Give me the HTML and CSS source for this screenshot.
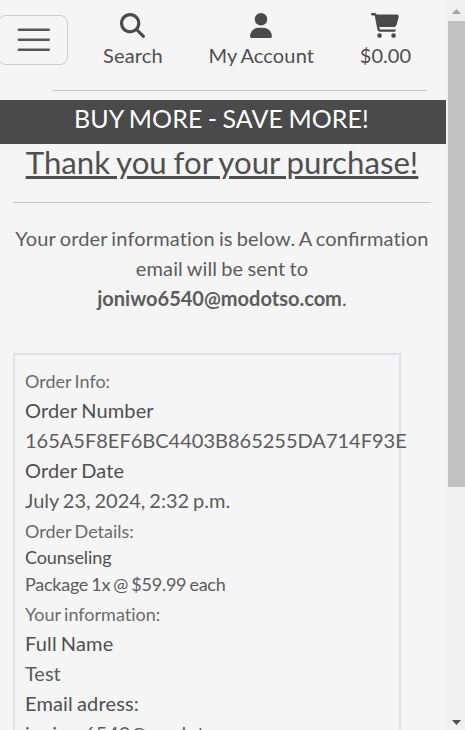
FILE: index.html
```html
<!DOCTYPE html>
<html lang="en">
<head>
<meta charset="utf-8">
<title>Order confirmation</title>
<link rel="stylesheet" href="styles.css">
</head>
<body>
<div class="viewport">
  <div class="page">
    <header class="header">
      <button class="menu" aria-label="Menu">
        <svg width="37.500" height="37.500" viewBox="0 0 30 30"><path d="M3 7h24M3 15h24M3 23h24" fill="none" stroke="#54585b" stroke-width="2" stroke-linecap="round"/></svg>
      </button>
      <nav class="nav">
        <a class="nav-item search">
          <svg width="25" height="25" viewBox="0 0 512 512"><path d="M416 208c0 45.900-14.900 88.300-40 122.700L502.600 457.400c12.500 12.500 12.500 32.800 0 45.300s-32.800 12.500-45.300 0L330.700 376c-34.400 25.200-76.800 40-122.700 40C93.100 416 0 322.900 0 208S93.100 0 208 0S416 93.100 416 208zM208 352a144 144 0 1 0 0-288 144 144 0 1 0 0 288z"/></svg>
          <span>Search</span>
        </a>
        <a class="nav-item account">
          <svg width="22" height="25" viewBox="0 0 448 512"><path d="M224 256A128 128 0 1 0 224 0a128 128 0 1 0 0 256zm-45.700 48C79.800 304 0 383.800 0 482.300C0 498.700 13.300 512 29.700 512H418.300c16.400 0 29.700-13.300 29.700-29.700C448 383.800 368.200 304 269.700 304H178.300z"/></svg>
          <span>My Account</span>
        </a>
        <a class="nav-item cart">
          <svg width="28" height="25" viewBox="0 0 576 512"><path d="M0 24C0 10.700 10.700 0 24 0H69.500c22 0 41.500 12.800 50.600 32h411c26.300 0 45.500 25 38.600 50.400l-41 152.300c-8.500 31.400-37 53.300-69.500 53.300H170.700l5.400 28.500c2.200 11.300 12.100 19.500 23.600 19.500H488c13.300 0 24 10.700 24 24s-10.700 24-24 24H199.700c-34.600 0-64.300-24.600-70.700-58.500L77.400 54.500c-.7-3.800-4-6.500-7.900-6.500H24C10.700 48 0 37.300 0 24zM128 464a48 48 0 1 1 96 0 48 48 0 1 1-96 0zm336-48a48 48 0 1 1 0 96 48 48 0 1 1 0-96z"/></svg>
          <span>$0.00</span>
        </a>
      </nav>
    </header>
    <div class="banner">BUY MORE - SAVE MORE!</div>
    <main class="content">
      <h1>Thank you for your purchase!</h1>
      <p class="intro">Your order information is below. A con<span class="lig">fi</span>rmation email will be sent to <strong>joniwo6540@modotso.com</strong>.</p>
      <section class="order">
        <div class="section">Order Info:</div>
        <div class="label">Order Number</div>
        <div class="value number">165A5F8EF6BC4403B865255DA714F93E</div>
        <div class="label">Order Date</div>
        <div class="value">July 23, 2024, 2:32 p.m.</div>
        <div class="section">Order Details:</div>
        <div class="product"><div class="label">Counseling</div><div class="line">Package 1x @ $59.99 each</div></div>
        <div class="section">Your information:</div>
        <div class="label">Full Name</div>
        <div class="value">Test</div>
        <div class="label">Email adress:</div>
        <div class="value">joniwo6540@modotso.com</div>
      </section>
    </main>
  </div>
  <div class="scrollbar">
    <svg class="arrow" width="17" height="21" viewBox="0 0 17 21"><path d="M4 14l4.500-5 4.500 5z" fill="#a3a3a3"/></svg>
    <div class="thumb"></div>
    <svg class="arrow" width="17" height="17" viewBox="0 0 17 17"><path d="M4 7h9l-4.500 5z" fill="#505050"/></svg>
  </div>
</div>
</body>
</html>
```
FILE: styles.css
```css
* { box-sizing: border-box; }
body {
  margin: 0;
  background: #f5f5f5;
  color: #5c5c5c;
  font: 20px/30px Lato, sans-serif;
  font-variant-ligatures: none;
  word-spacing: -0.06em;
}
.viewport {
  display: flex;
  height: 730px;
  overflow: hidden;
}
.page {
  width: 446px;
  flex: none;
}
.header {
  display: flex;
  height: 100px;
}
.menu {
  width: 70px;
  height: 50px;
  margin: 15px 0 0 -2px;
  padding: 0 0 0 1px;
  flex: none;
  display: flex;
  align-items: center;
  justify-content: center;
  background: none;
  border: 1px solid #cbcbcb;
  border-radius: 8px;
}
.nav {
  display: flex;
  width: 375px;
  height: 91px;
  margin-left: -16px;
  padding: 13px 16px 0 51px;
  justify-content: space-between;
  border-bottom: 1px solid #c8c8c8;
  flex: none;
}
.nav-item {
  display: flex;
  flex-direction: column;
  align-items: center;
  gap: 2px;
  color: #4f4f4f;
  letter-spacing: 0.15px;
  white-space: nowrap;
}
.cart { letter-spacing: 0; }
.nav-item svg { fill: #4a4a4a; flex: none; }
.banner {
  height: 44px;
  padding-right: 3px;
  background: #4a4a4a;
  color: #fff;
  font-size: 25px;
  letter-spacing: 0.1px;
  line-height: 36px;
  text-align: center;
}
.content { padding: 0 15px 0 13px; }
h1 {
  margin: 0 0 20px;
  height: 59px;
  border-bottom: 1px solid #c8c8c8;
  color: #4f4f4f;
  font-size: 31.2px;
  font-weight: 400;
  line-height: 37px;
  text-align: center;
  text-decoration: underline;
  text-decoration-thickness: 3px;
  white-space: nowrap;
}
.intro {
  margin: 0 0 40px;
  letter-spacing: 0.15px;
  text-align: center;
}
.intro strong { letter-spacing: 0; }
.lig {
  font-variant-ligatures: common-ligatures;
  letter-spacing: 0;
}
.order {
  width: 388px;
  height: 430px;
  padding: 11px 10px;
  border: 2px solid #dee2e6;
}
.order .label,
.order .value { margin-top: -1px; margin-bottom: 1px; }
.label { color: #4f4f4f; letter-spacing: 0.15px; }
.section {
  color: #6a6a6a;
  font-size: 18px;
}
.product {
  font-size: 18px;
  line-height: 27px;
}
.order .product .label {
  margin-top: -2px;
  margin-bottom: 0;
  letter-spacing: -0.1px;
}
.product .line {
  margin-bottom: 1px;
  letter-spacing: -0.25px;
}
.scrollbar {
  display: flex;
  flex-direction: column;
  justify-content: space-between;
  width: 19px;
  padding-left: 2px;
  background: #f0f0f0;
}
.arrow { flex: none; }
.thumb {
  height: 466px;
  margin-bottom: auto;
  background: #c1c1c1;
}
```
